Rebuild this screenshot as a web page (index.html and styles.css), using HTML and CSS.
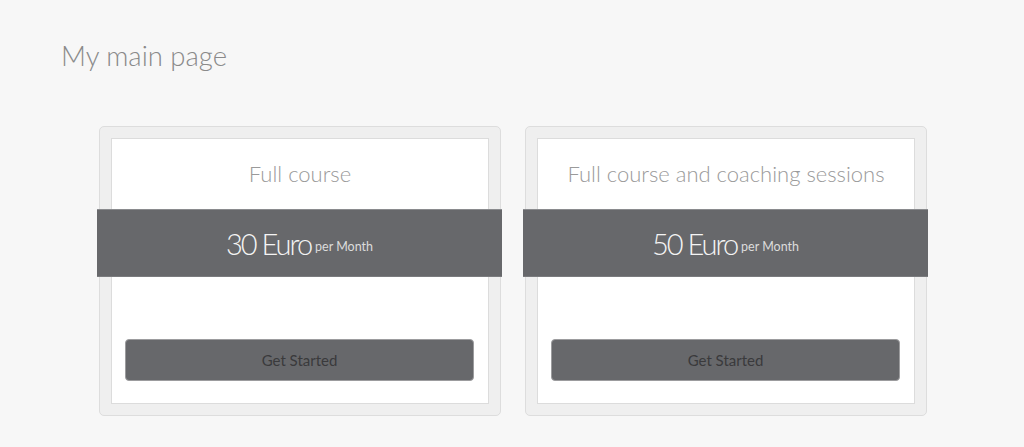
FILE: index.html
```html
<!DOCTYPE html>
<html>
<head>
<meta charset="utf-8">
<title>My main page</title>
<link rel="stylesheet" href="styles.css">
</head>
<body>
<h1 class="page-title">My main page</h1>
<div class="plans">
  <div class="plan">
    <div class="plan-inner">
      <div class="plan-name">Full course</div>
      <div class="plan-price"><span class="amount">30 Euro</span><span class="period">per Month</span></div>
      <button class="plan-btn">Get Started</button>
    </div>
  </div>
  <div class="plan">
    <div class="plan-inner">
      <div class="plan-name">Full course and coaching sessions</div>
      <div class="plan-price"><span class="amount">50 Euro</span><span class="period">per Month</span></div>
      <button class="plan-btn">Get Started</button>
    </div>
  </div>
</div>
</body>
</html>
```

FILE: styles.css
```css
html, body {
  margin: 0;
  padding: 0;
}
body {
  background: #f7f7f7;
  font-family: Lato, "Open Sans", sans-serif;
  width: 1024px;
  height: 447px;
  overflow: hidden;
}
.page-title {
  margin: 0;
  padding: 39px 0 0 61px;
  font-size: 27.5px;
  font-weight: 300;
  line-height: 34px;
  color: #8a8a8a;
}
.plans {
  display: flex;
  gap: 24px;
  margin: 53px 0 0 99px;
}
.plan {
  width: 402px;
  box-sizing: border-box;
  background: #efefef;
  border: 1px solid #dddddd;
  border-radius: 5px;
  padding: 11px;
}
.plan-inner {
  background: #ffffff;
  border: 1px solid #dcdcdc;
  padding: 22px 0 22px;
  display: flex;
  flex-direction: column;
}
.plan-name {
  text-align: center;
  font-size: 22px;
  font-weight: 300;
  line-height: 26px;
  color: #9a9a9a;
  margin-bottom: 22px;
}
.plan-price {
  margin: 0 -14px 0 -15px;
  height: 68px;
  box-sizing: border-box;
  background: #67686b;
  border-top: 1px solid #8a8b8e;
  border-bottom: 1px solid #7a7b7e;
  padding-top: 2px;
  text-align: center;
  line-height: 64px;
  white-space: nowrap;
}
.amount {
  font-size: 29px;
  font-weight: 300;
  letter-spacing: -2px;
  color: #f4f4f4;
}
.period {
  font-size: 12.5px;
  font-weight: 400;
  color: #dcdcdc;
  margin-left: 4px;
  vertical-align: 4px;
}
.plan-btn {
  margin: 62px 14px 0 13px;
  height: 42px;
  background: #67686b;
  border: 1px solid #9c9c9e;
  border-radius: 4px;
  font-family: Lato, "Open Sans", sans-serif;
  font-size: 15px;
  color: #3a3a3c;
  padding: 0;
}
```
